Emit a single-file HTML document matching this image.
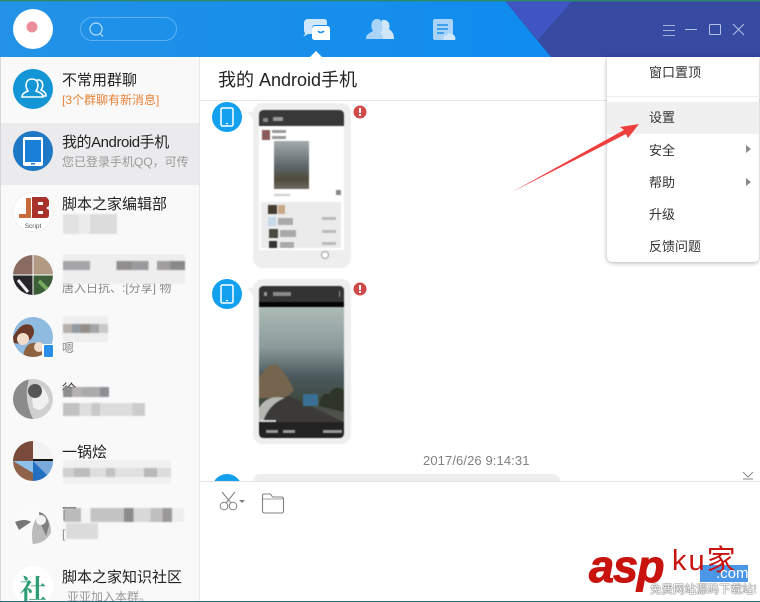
<!DOCTYPE html>
<html><head><meta charset="utf-8">
<style>
*{margin:0;padding:0;box-sizing:border-box}
html,body{width:760px;height:602px;overflow:hidden;background:#fff;font-family:"Liberation Sans","Noto Sans CJK SC",sans-serif}
.a{position:absolute}
#app{position:relative;width:760px;height:602px;overflow:hidden;background:#fff}
.t{position:absolute;left:62px;font-size:15px;line-height:20px;color:#222;white-space:nowrap}
.s{position:absolute;left:62px;font-size:12px;line-height:18px;color:#999;white-space:nowrap}
.av{position:absolute;left:13px;width:40px;height:40px;border-radius:50%;overflow:hidden}
.bl{position:absolute;filter:blur(.7px)}
.m{position:absolute;left:649px;font-size:13px;line-height:18px;color:#333;white-space:nowrap}
</style></head><body><div id="app">
<svg class="a" style="left:0;top:0" width="760" height="58" viewBox="0 0 760 58">
<defs><linearGradient id="h" x1="0" x2="1" y1="0" y2="0"><stop offset="0" stop-color="#2392e6"/><stop offset="1" stop-color="#0789f2"/></linearGradient></defs>
<rect x="0" y="0" width="760" height="57" fill="url(#h)"/>
<polygon points="505,1 760,1 760,57 551,57" fill="#354aa0"/>
<polygon points="505,1 572,1 538,40" fill="#3f55c2"/>
<rect x="0" y="0" width="760" height="1.4" fill="#2b8a6a"/>
<circle cx="33" cy="29" r="20" fill="#fff"/>
<circle cx="32" cy="27" r="5.500" fill="#ec8d9c"/>
<rect x="80.500" y="17.500" width="96" height="23" rx="11.500" fill="none" stroke="#5cb0f2"/>
<circle cx="96" cy="29" r="6" fill="none" stroke="#b6dcf8" stroke-width="1.200"/>
<path d="M100 33.500l3 3" stroke="#b6dcf8" stroke-width="1.200"/>
<path d="M308 19h16q3 0 3 3v3h-12q-3 0-3 3v6h-4l-5 3q2-2 2-4-1-1-1-3V22q1-3 4-3z" fill="#cfe6fb"/>
<path d="M315 26h12q3 0 3 3v11h-15q-3 0-3-3v-8q0-3 3-3z" fill="#fff"/>
<path d="M318 31q2.500 3 6 0" fill="none" stroke="#1c8fe8" stroke-width="1.500"/>
<polygon points="310,57 316,51 322,57" fill="#fff"/>
<path d="M366 39c0-5 4-6 7-8-3-4-2-12 4-12s8 8 4 12c3 2 7 3 7 8z" fill="#a9d4f8"/>
<path d="M383 39c0-4-1-5-3-7 2-1 3-4 2-7 0-2 0-4 0-5 5-1 9 3 7 9 2 2 5 3 5 10z" fill="#cfe6fb"/>
<path d="M433 21q0-2 2-2h16q2 0 2 2v14q-5 0-6 5h-12q-2 0-2-2z" fill="#a9d4f8"/>
<path d="M437 25h11M437 29h11M437 33h7" stroke="#1c8fe8" stroke-width="1.500"/>
<path d="M443 40q0-5 4-5 2-3 5-1 3 1 3 3 1 1 0 3z" fill="#cfe6fb"/>
<path d="M663 25.500h12M663 30.500h12M663 35.500h12" stroke="#a6b2dc" stroke-width="1"/>
<path d="M685 29.500h12" stroke="#b6c0e4" stroke-width="1"/>
<rect x="709.500" y="24.500" width="11" height="10" rx="1" fill="none" stroke="#b6c0e4"/>
<path d="M733 24l11 11M744 24l-11 11" stroke="#b6c0e4" stroke-width="1"/>
</svg>

<!-- sidebar -->
<div class="a" style="left:1px;top:57px;width:199px;height:545px;background:#f9f9fa;border-right:1px solid #e8e8e8"></div>
<div class="a" style="left:1px;top:123px;width:198px;height:62px;background:#ebebed"></div>
<div class="a" style="left:200px;top:100px;width:560px;height:1px;background:#e6e6e6"></div>
<div class="a" style="left:0;top:57px;width:1px;height:545px;background:#d8d8d8"></div>

<svg class="av" style="top:69px" viewBox="0 0 40 40"><rect width="40" height="40" fill="#1395d6"/>
<path d="M9 28c0-4 4-5 6-6-3-4-3-12 4-12s7 8 4 12c2 1 7 2 7 6z" fill="none" stroke="#fff" stroke-width="1.600"/>
<path d="M24 11c6-1 7 6 4 10 2 1 5 2 5 6h-3" fill="none" stroke="#fff" stroke-width="1.600"/></svg>
<div class="t" style="top:71px">不常用群聊</div>
<div class="s" style="top:91px;color:#e58235">[3个群聊有新消息]</div>

<svg class="av" style="top:131px" viewBox="0 0 40 40"><rect width="40" height="40" fill="#1e78c6"/>
<rect x="10" y="6" width="20" height="29" rx="2" fill="#fff"/><rect x="12" y="9" width="16" height="22" fill="#1a7fd6"/><rect x="18" y="32" width="4" height="1.500" fill="#1e78c6"/></svg>
<div class="t" style="top:133px;letter-spacing:-.45px">我的Android手机</div>
<div class="s" style="top:153px">您已登录手机QQ，可传</div>

<svg class="av" style="top:192px" viewBox="0 0 40 40"><circle cx="20" cy="20" r="20" fill="#fff" stroke="#e5e5e5"/>
<path d="M6 22h7V6h5v20H6z" fill="#c96a3a"/><path d="M19 5h14q3 0 3 4v5l-3 2 3 2v5q0 3-3 3H19z" fill="#a7322c"/><rect x="25" y="10" width="5" height="3" fill="#fff"/><rect x="25" y="19" width="5" height="3" fill="#fff"/>
<text x="20" y="36" font-size="6.500" text-anchor="middle" fill="#555" font-family="Liberation Sans">Script</text></svg>
<div class="t" style="top:195px">脚本之家编辑部</div>
<div class="bl" style="left:63px;top:214px;width:54px;height:20px;background:linear-gradient(90deg,#e2e2e2 0 30%,#ececec 30% 50%,#dcdcdc 50% 100%)"></div>

<svg class="av" style="top:255px" viewBox="0 0 40 40"><rect width="20" height="20" fill="#8a6b62"/><rect x="20" width="20" height="20" fill="#b09a84"/><rect y="20" width="20" height="20" fill="#26262a"/><rect x="20" y="20" width="20" height="20" fill="#3c5f38"/><path d="M20 0v40M0 20h40" stroke="#fff"/><path d="M5 25l10 12" stroke="#eee" stroke-width="3"/><path d="M26 26l8 8" stroke="#75a860" stroke-width="4"/></svg>
<div class="s" style="top:279px;color:#888">唐入日抗、:[分享] 物</div>
<div class="bl" style="left:63px;top:254px;width:122px;height:30px;background:#eeeeef"></div>
<div class="bl" style="left:63px;top:261px;width:122px;height:9px;background:linear-gradient(90deg,#a4a4a6 0 22%,#eeeeef 22% 44%,#8f8d8e 44% 56%,#9a9a9c 56% 70%,#eeeeef 70% 77%,#a09d9f 77% 88%,#8a8889 88% 100%)"></div>

<svg class="av" style="top:317px" viewBox="0 0 40 40"><rect width="40" height="40" fill="#8fbbe0"/><path d="M0 20q8-16 18-12 6 6 0 14-8 6-18 4z" fill="#6b3a28"/><circle cx="10" cy="22" r="6" fill="#f4dccb"/><path d="M10 40q2-16 14-14 12 2 10 14z" fill="#8f6240"/><circle cx="26" cy="30" r="5" fill="#f2dccc"/></svg>
<div class="a" style="left:42px;top:344px;width:13px;height:15px;background:#fff"></div>
<div class="a" style="left:44px;top:345px;width:9px;height:12px;background:#2a8fe8;border-radius:1px"></div>
<div class="bl" style="left:63px;top:316px;width:45px;height:26px;background:#eeeeef"></div>
<div class="bl" style="left:63px;top:324px;width:45px;height:9px;background:linear-gradient(90deg,#b5b0aa 0 20%,#939aa2 20% 40%,#928d88 40% 60%,#a3a4a8 60% 80%,#c8c9c9 80% 100%)"></div>
<div class="s" style="top:339px;color:#888">嗯</div>

<svg class="av" style="top:379px" viewBox="0 0 40 40"><rect width="40" height="40" fill="#cfcfcf"/><path d="M0 0h16q-6 20 4 40H0z" fill="#8b8b8b"/><path d="M18 8q14-6 18 14-8 14-16 6z" fill="#f0f0f0"/><circle cx="22" cy="12" r="7" fill="#555"/></svg>
<div class="t" style="top:381px;color:#333">徐</div>
<div class="bl" style="left:63px;top:387px;width:46px;height:10px;background:linear-gradient(90deg,#8f8d90 0 20%,#b5b2b1 20% 40%,#aaa 40% 80%,#8c8e94 80% 100%)"></div>
<div class="bl" style="left:63px;top:403px;width:82px;height:13px;background:linear-gradient(90deg,#c3c2c3 0 20%,#dedede 20% 35%,#c8c8c8 35% 45%,#dcdcdc 45% 85%,#ccc 85% 100%)"></div>

<svg class="av" style="top:441px" viewBox="0 0 40 40"><rect width="20" height="20" fill="#7a4a3c"/><rect x="20" width="20" height="20" fill="#f2f2f2"/><rect y="20" width="20" height="20" fill="#91624a"/><rect x="20" y="20" width="20" height="20" fill="#2470c0"/><rect x="20" y="18" width="20" height="2" fill="#111"/><path d="M0 20l20 12V20z" fill="#8ec0e8"/><path d="M20 20h20v20" fill="#cfe4f5" opacity=".5"/></svg>
<div class="t" style="top:443px">一锅烩</div>
<div class="bl" style="left:63px;top:460px;width:108px;height:24px;background:#f0f0f1"></div>
<div class="bl" style="left:63px;top:468px;width:108px;height:9px;background:linear-gradient(90deg,#d0d0d0 0 10%,#bcbcbd 10% 25%,#dedede 25% 40%,#c2c2c3 40% 48%,#e0e0e0 48% 75%,#b8b8ba 75% 87%,#dcdcdc 87% 100%)"></div>

<svg class="av" style="top:504px" viewBox="0 0 40 40"><rect width="40" height="40" fill="#fafafa"/><path d="M20 42q-4-24 8-32 10 4 10 18 0 10-4 14z" fill="#bbb"/><path d="M26 8q9 2 10 14l-3 10-6-14z" fill="#7e7e7e"/><circle cx="28" cy="16" r="5" fill="#f4f4f4"/><path d="M2 18q10-4 16 0l-12 8z" fill="#777"/></svg>
<div class="t" style="top:505px">丽</div>
<div class="bl" style="left:64px;top:508px;width:120px;height:14px;background:linear-gradient(90deg,#bbb 0 14%,#f4f4f4 14% 22%,#c4c3c3 22% 50%,#8b8a8c 50% 58%,#d8d8d8 58% 72%,#c0bfbf 72% 82%,#9b9898 82% 90%,#eee 90% 100%)"></div>
<div class="s" style="top:525px;color:#888">[</div>
<div class="bl" style="left:66px;top:523px;width:32px;height:16px;background:#dbdbdb"></div>

<svg class="av" style="top:566px;background:#fff" viewBox="0 0 40 40"><text x="20" y="33" font-size="27" font-weight="bold" text-anchor="middle" fill="#2f9d74" font-family="Noto Serif CJK SC,serif">社</text></svg>
<div class="t" style="top:568px">脚本之家知识社区</div>
<div class="s" style="left:67px;top:588px">亚亚加入本群。</div>

<!-- chat header -->
<div class="a" style="left:218px;top:67px;font-size:18px;line-height:26px;color:#222;white-space:nowrap">我的 Android手机</div>

<!-- message 1 -->
<svg class="a" style="left:212px;top:102px" width="30" height="30"><circle cx="15" cy="15" r="15" fill="#12a0ef"/><rect x="9" y="6" width="12" height="18" rx="1.500" fill="none" stroke="#fff" stroke-width="1.500"/><rect x="14" y="21" width="2" height="1.200" fill="#fff"/></svg>
<svg class="a" style="left:245px;top:102px;filter:blur(.45px)" width="125" height="170">
<polygon points="3,10 10,10 10,20" fill="#eee"/>
<rect x="8" y="1" width="98" height="165" rx="10" fill="#eeeeee"/>
<rect x="14" y="10" width="85" height="138" fill="#fff"/>
<path d="M14 13q0-5 5-5h75q5 0 5 5v11H14z" fill="#383838"/>
<rect x="18" y="16" width="5" height="4" fill="#888"/><rect x="28" y="15" width="10" height="4" fill="#999"/>
<rect x="17" y="28" width="8" height="10" fill="#8a5a58"/><rect x="27" y="28" width="14" height="3" fill="#999"/><rect x="27" y="34" width="14" height="3" fill="#999"/>
<defs><linearGradient id="p" x1="0" x2="0" y1="0" y2="1"><stop offset="0" stop-color="#a3abad"/><stop offset=".55" stop-color="#5c6468"/><stop offset=".8" stop-color="#4f4a3a"/><stop offset="1" stop-color="#6c6a62"/></linearGradient>
<linearGradient id="q" x1="0" x2="0" y1="0" y2="1"><stop offset="0" stop-color="#aebbb6"/><stop offset=".35" stop-color="#8b9a9a"/><stop offset=".6" stop-color="#4c5a5e"/><stop offset=".8" stop-color="#3e4a40"/><stop offset="1" stop-color="#55544e"/></linearGradient></defs>
<rect x="29" y="39" width="35" height="48" fill="url(#p)"/>
<rect x="29" y="92" width="16" height="2" fill="#ccc"/><rect x="91" y="88" width="5" height="5" fill="#888"/>
<rect x="16" y="100" width="80" height="46" fill="#ebebeb"/>
<rect x="23" y="103" width="9" height="9" fill="#443c30"/><rect x="33" y="103" width="7" height="9" fill="#c9a888"/>
<rect x="23" y="115" width="8" height="9" fill="#c7d9ea"/><rect x="33" y="116" width="15" height="7" fill="#aaa"/><rect x="77" y="115" width="14" height="3" fill="#bbb"/>
<rect x="24" y="127" width="9" height="9" fill="#4a4a40"/><rect x="35" y="128" width="16" height="7" fill="#aaa"/><rect x="77" y="128" width="14" height="3" fill="#bbb"/>
<rect x="24" y="139" width="8" height="7" fill="#333"/><rect x="35" y="140" width="14" height="6" fill="#aaa"/><rect x="77" y="140" width="14" height="3" fill="#bbb"/>
<circle cx="80" cy="153" r="3.500" fill="#fff" stroke="#999"/>
</svg>
<svg class="a" style="left:353px;top:105px" width="14" height="14"><circle cx="7" cy="7" r="6.500" fill="#d04a4a"/><rect x="6" y="3" width="2" height="5" fill="#fff"/><rect x="6" y="9" width="2" height="2" fill="#fff"/></svg>

<!-- message 2 -->
<svg class="a" style="left:212px;top:279px" width="30" height="30"><circle cx="15" cy="15" r="15" fill="#12a0ef"/><rect x="9" y="6" width="12" height="18" rx="1.500" fill="none" stroke="#fff" stroke-width="1.500"/><rect x="14" y="21" width="2" height="1.200" fill="#fff"/></svg>
<svg class="a" style="left:245px;top:278px;filter:blur(.45px)" width="125" height="170">
<polygon points="3,10 10,10 10,20" fill="#eee"/>
<rect x="8" y="1" width="98" height="165" rx="10" fill="#eeeeee"/>
<path d="M14 13q0-5 5-5h75q5 0 5 5v142q0 5-5 5H19q-5 0-5-5z" fill="#222"/>
<path d="M14 13q0-5 5-5h75q5 0 5 5v11H14z" fill="#333"/>
<rect x="14" y="24" width="85" height="5" fill="#050505"/>
<rect x="14" y="29" width="85" height="115" fill="url(#q)"/>
<path d="M14 100q8-14 17-14 8 6 18 26l-8 8H14z" fill="#75654f"/>
<path d="M14 144q10-22 30-26l55 26z" fill="#3c3a38"/>
<path d="M14 130q8-14 26-10-16 6-22 24h-4z" fill="#b5b6b2"/>
<rect x="58" y="116" width="15" height="12" fill="#3a6f94"/>
<path d="M74 128q2-14 10-12 6-10 15-4v22z" fill="#2e3528"/>
<rect x="19" y="14" width="3" height="4" fill="#999"/><rect x="28" y="14" width="18" height="4" fill="#8a8a8a"/><rect x="94" y="13" width="1" height="6" fill="#999"/>
<rect x="15" y="142" width="16" height="2" fill="#ddd"/>
<rect x="21" y="152" width="12" height="3" fill="#999"/><rect x="38" y="152" width="12" height="3" fill="#999"/><rect x="78" y="152" width="19" height="3" fill="#999"/>
</svg>
<svg class="a" style="left:353px;top:282px" width="14" height="14"><circle cx="7" cy="7" r="6.500" fill="#d04a4a"/><rect x="6" y="3" width="2" height="5" fill="#fff"/><rect x="6" y="9" width="2" height="2" fill="#fff"/></svg>

<div class="a" style="left:423px;top:453px;font-size:13px;line-height:16px;color:#808080;white-space:nowrap;letter-spacing:.1px">2017/6/26 9:14:31</div>
<svg class="a" style="left:212px;top:474px" width="30" height="7"><circle cx="15" cy="15" r="15" fill="#12a0ef"/></svg>
<div class="a" style="left:253px;top:474px;width:307px;height:7px;background:#eeeeee;border-radius:7px 7px 0 0"></div>
<div class="a" style="left:200px;top:481px;width:560px;height:1px;background:#e2e2e2"></div>
<svg class="a" style="left:742px;top:471px" width="14" height="10"><path d="M1 1l5 5 5-5M1 8h10" fill="none" stroke="#8a8a8a"/></svg>

<!-- toolbar -->
<svg class="a" style="left:215px;top:490px" width="70" height="26" fill="none" stroke="#808080" stroke-width="1">
<circle cx="9" cy="16" r="3.800"/><circle cx="18" cy="16" r="3.800"/>
<path d="M11 13L20 2M16 13L7 2"/>
<polygon points="24,10 30,10 27,13" fill="#808080" stroke="none"/>
<path d="M47.500 6q0-2 2-2h6l2 3h9q2 0 2 2v12q0 2-2 2h-17q-2 0-2-2z" stroke-width="1.100"/>
<path d="M47.500 9h21" stroke-width=".8"/>
</svg>

<!-- menu -->
<div class="a" style="left:607px;top:57px;width:152px;height:205px;background:#fff;border-radius:0 0 5px 5px;box-shadow:0 1px 5px rgba(0,0,0,.3)"></div>
<div class="a" style="left:607px;top:96px;width:152px;height:1px;background:#eee"></div>
<div class="a" style="left:607px;top:102px;width:152px;height:32px;background:#f0f0f0"></div>
<div class="m" style="top:64px">窗口置顶</div>
<div class="m" style="top:109px">设置</div>
<div class="m" style="top:142px">安全</div>
<div class="m" style="top:174px">帮助</div>
<div class="m" style="top:206px">升级</div>
<div class="m" style="top:238px">反馈问题</div>
<div class="a" style="left:746px;top:145px;border-left:5px solid #8a8a8a;border-top:4px solid transparent;border-bottom:4px solid transparent"></div>
<div class="a" style="left:746px;top:178px;border-left:5px solid #8a8a8a;border-top:4px solid transparent;border-bottom:4px solid transparent"></div>

<!-- red arrow -->
<svg class="a" style="left:505px;top:118px" width="140" height="80"><path d="M7 74L119 12 115 9 134 6 123 20 121 16z" fill="#ee3f3f"/></svg>

<!-- watermark -->
<div class="a" style="left:700px;top:565px;width:48px;height:17px;background:#4a97e8"></div>
<div class="a" style="left:589px;top:544px;font-size:45px;line-height:46px;font-weight:bold;font-style:italic;color:#c8130e;white-space:nowrap;letter-spacing:-1px;-webkit-text-stroke:1px #c8130e">asp</div>
<div class="a" style="left:672px;top:544px;font-size:29px;line-height:34px;color:#c8130e;white-space:nowrap;letter-spacing:2px">ku家</div>
<div class="a" style="left:716px;top:565px;font-size:15px;line-height:18px;color:#fff;white-space:nowrap">.com</div>
<div class="a" style="left:650px;top:583px;font-size:11.500px;line-height:15px;color:#fff;white-space:nowrap;text-shadow:0 0 1px #444,0 0 1px #444">免费网站源码下载站!</div>
<div class="a" style="left:0;top:601px;width:760px;height:1px;background:#1f6f86"></div>
</div></body></html>
